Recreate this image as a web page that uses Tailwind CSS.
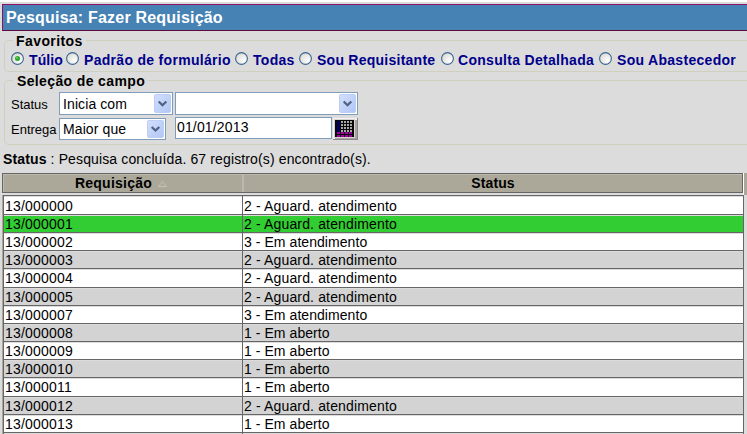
<!DOCTYPE html>
<html lang="pt-BR">
<head>
<meta charset="utf-8">
<title>Pesquisa: Fazer Requisição</title>
<script src="https://cdn.jsdelivr.net/npm/@tailwindcss/browser@4"></script>
</head>
<body class="w-[747px] h-[434px] overflow-hidden bg-[#dcdcdc] border-t-2 border-white font-['Liberation_Sans',Arial,sans-serif] text-[14px] leading-[16px] text-black whitespace-nowrap">
<svg class="absolute w-0 h-0">
  <defs>
    <radialGradient id="rg" cx="0.7" cy="0.7" r="0.8"><stop offset="0" stop-color="#fff"/><stop offset="1" stop-color="#d8d8d2"/></radialGradient>
    <linearGradient id="btn" x1="0" y1="0" x2="1" y2="1"><stop offset="0" stop-color="#d3dffc"/><stop offset="1" stop-color="#b0c6f6"/></linearGradient>
    <symbol id="radio" viewBox="0 0 13 13"><circle cx="6.5" cy="6.5" r="5.9" fill="url(#rg)" stroke="#3a668f" stroke-width="1.1"/></symbol>
    <symbol id="drop" viewBox="0 0 17 19"><rect x="0.5" y="0.5" width="16" height="18" rx="1.5" fill="url(#btn)" stroke="#bccdf5"/><path d="M4.7 7.5 L8.5 11.2 L12.3 7.5" fill="none" stroke="#4d6185" stroke-width="2.2"/></symbol>
  </defs>
</svg>

<h1 class="mt-[2px] ml-[2px] h-[27px] border border-r-0 border-t-[#8f1060] border-l-[#8f1060] border-b-[#5c0a40] bg-[#4682b4] pl-[3px] pt-[3px] text-[16px] leading-[20px] font-bold text-white tracking-[0.2px]">Pesquisa: Fazer Requisição</h1>

<section class="relative mt-[9px] ml-[4px] h-[32px] rounded-l-[5px] border border-r-0 border-[#d0d0bf]">
  <h2 class="absolute left-[8px] -top-[8px] bg-[#dcdcdc] px-[3px] font-bold tracking-[0.42px]">Favoritos</h2>
  <div class="flex h-[14px] mt-[11px] ml-[6px] font-bold text-[#00008b]">
    <label class="flex w-[55px]"><svg class="w-[13px] h-[13px] mr-[5px]" viewBox="0 0 13 13"><use href="#radio"/><circle cx="6.5" cy="6.5" r="2.5" fill="#27a827"/><circle cx="6" cy="5.8" r="1" fill="#68d568"/></svg><span class="tracking-[0.1px]">Túlio</span></label>
    <label class="flex w-[169px]"><svg class="w-[13px] h-[13px] mr-[5px]"><use href="#radio"/></svg><span class="tracking-[0.3px]">Padrão de formulário</span></label>
    <label class="flex w-[64px]"><svg class="w-[13px] h-[13px] mr-[5px]"><use href="#radio"/></svg><span class="tracking-[0.3px]">Todas</span></label>
    <label class="flex w-[142px]"><svg class="w-[13px] h-[13px] mr-[5px]"><use href="#radio"/></svg><span class="tracking-[0.25px]">Sou Requisitante</span></label>
    <label class="flex w-[158px]"><svg class="w-[13px] h-[13px] mr-[4px]"><use href="#radio"/></svg><span class="tracking-[0.3px]">Consulta Detalhada</span></label>
    <label class="flex"><svg class="w-[13px] h-[13px] mr-[5px]"><use href="#radio"/></svg><span class="tracking-[0.3px]">Sou Abastecedor</span></label>
  </div>
</section>

<section class="relative mt-[8px] ml-[4px] h-[65px] rounded-l-[5px] border border-r-0 border-[#d0d0bf]">
  <h2 class="absolute left-[8px] -top-[8px] bg-[#dcdcdc] pl-[4px] pr-[3px] font-bold tracking-[0.37px]">Seleção de campo</h2>
  <div class="flex h-[23px] mt-[11px] ml-[6px]">
    <span class="w-[48px] pt-[5px] text-[13px]">Status</span>
    <div class="flex w-[114px] h-[23px] justify-between border border-[#7f9db9] bg-white pl-[3px] pr-px pt-px"><span class="pt-[2px] tracking-[0.1px]">Inicia com</span><svg class="w-[17px] h-[19px]"><use href="#drop"/></svg></div>
    <div class="flex ml-[2px] w-[183px] h-[23px] justify-end border border-[#7f9db9] bg-white pr-px pt-px"><svg class="w-[17px] h-[19px]"><use href="#drop"/></svg></div>
  </div>
  <div class="flex mt-[2px] ml-[6px]">
    <span class="w-[48px] pt-[5px] text-[13px]">Entrega</span>
    <div class="flex mt-[1px] w-[107px] h-[22px] justify-between border border-[#7f9db9] bg-white pl-[3px] pr-px pt-px"><span class="pt-[1px] tracking-[0.1px]">Maior que</span><svg class="w-[17px] h-[18px]" viewBox="0 0 17 19" preserveAspectRatio="none"><use href="#drop"/></svg></div>
    <div class="ml-[9px] w-[157px] h-[22px] border border-[#7f9db9] bg-white pl-px pt-[1px] tracking-[0.15px]">01/01/2013</div>
    <svg class="ml-[1px] mt-[1px] w-[25px] h-[22px]" viewBox="0 0 25 22" shape-rendering="crispEdges">
      <rect width="25" height="22" fill="#8c8686"/><rect width="24" height="21" fill="#f4f2f2"/><path d="M2 21V20H22V2H24V21Z" fill="#aaa5a5"/><rect x="1" y="1" width="21" height="19" fill="#d6d3ce"/>
      <rect x="2" y="2" width="19" height="17" fill="#080808"/>
      <rect x="4" y="3" width="3" height="11" fill="#00005c"/>
      <path d="M8 4h12M8 7h12M8 10h12M8 13h12" stroke="#a8a8a8" stroke-width="2" stroke-dasharray="2 1"/>
      <path d="M4 15h16M4 17.5h16" stroke="#a000a0" stroke-width="2" stroke-dasharray="3 1"/>
    </svg>
  </div>
</section>

<p class="mt-[6px] ml-[3px] h-[22px] tracking-[0.13px]"><b>Status</b> : Pesquisa concluída. 67 registro(s) encontrado(s).</p>

<div class="flex ml-[2px] h-[22px] font-bold">
  <div class="flex w-[741px] h-[20px] border border-[#666] bg-[#aca899]">
    <div class="flex w-[239px] justify-center items-start border-l border-t border-[#bbb8ae] pr-[4px] tracking-[0.25px]">Requisição<svg class="ml-[6px] mt-[6px] w-[9px] h-[6px]" viewBox="0 0 9 6"><path d="M4.5 0.5L8.5 5.5H0.5Z" fill="none" stroke="#c4c1b5"/></svg></div>
    <div class="flex-1 text-center border-l-2 border-t border-[#bbb8ae] tracking-[0.1px]">Status</div>
  </div>
  <div class="w-[1px] h-[22px] bg-white"></div>
  <div class="flex-1 h-[22px] bg-[#aca899]"></div>
</div>

<div class="ml-[2px] w-[742px] border-l border-[#aca899]">
  <div id="rows" class="border-l border-t border-r border-[#666]"></div>
</div>

<script>
const rows = [
  ["13/000000", "2 - Aguard. atendimento", 19],
  ["13/000001", "2 - Aguard. atendimento", 18],
  ["13/000002", "3 - Em atendimento", 18],
  ["13/000003", "2 - Aguard. atendimento", 18],
  ["13/000004", "2 - Aguard. atendimento", 19],
  ["13/000005", "2 - Aguard. atendimento", 18],
  ["13/000007", "3 - Em atendimento", 18],
  ["13/000008", "1 - Em aberto", 18],
  ["13/000009", "1 - Em aberto", 18],
  ["13/000010", "1 - Em aberto", 18],
  ["13/000011", "1 - Em aberto", 19],
  ["13/000012", "2 - Aguard. atendimento", 18],
  ["13/000013", "1 - Em aberto", 18],
  ["", "", 18]
];
document.getElementById("rows").innerHTML = rows.map(([id, status, h], i) => {
  const bg = i === 1 ? "bg-[#32cd32]" : i % 2 ? "bg-[#d3d3d3]" : "bg-white";
  const pad = i === 0 ? "pt-[2px]" : "pt-px";
  const spacing = status.includes("Aguard") ? "tracking-[0.15px]" : "tracking-[0.06px]";
  return `<div class="flex border-b border-[#666] shadow-[inset_0_1px_0_#dcdcdc] ${bg}" style="height:${h}px">
    <div class="w-[239px] border-r border-[#666] pl-[1px] tracking-[0.2px] ${pad}">${id}</div><div class="pl-[1px] ${spacing} ${pad}">${status}</div></div>`;
}).join("");
</script>
</body>
</html>
